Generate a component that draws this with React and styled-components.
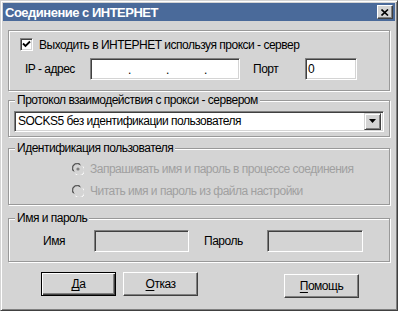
import React from "react";
import styled, { createGlobalStyle } from "styled-components";

const Global = createGlobalStyle`
  html, body { margin: 0; padding: 0; background: #d4d4d4; }
  body { font-family: "Liberation Sans", Arial, sans-serif; font-size: 12px; letter-spacing: -0.5px; color: #000; }
`;

const FACE = "#d4d4d4";

const Window = styled.div`
  width: 398px;
  height: 311px;
  box-sizing: border-box;
  background: ${FACE};
  border: 1px solid;
  border-color: ${FACE} #404040 #404040 ${FACE};
  box-shadow: inset 1px 1px 0 #fff, inset -1px -1px 0 #808080;
  padding: 2px;
  display: flex;
  flex-direction: column;
`;

const TitleBar = styled.div`
  height: 18px;
  background: #4a6a9a;
  display: flex;
  align-items: center;
  padding: 0 2px 0 2px;
  flex: none;
`;

const Title = styled.span`
  color: #fff;
  font-weight: bold;
  font-size: 13px;
  letter-spacing: -0.5px;
  flex: 1;
  white-space: nowrap;
`;

const CloseBtn = styled.div`
  width: 16px;
  height: 14px;
  box-sizing: border-box;
  background: ${FACE};
  border: 1px solid;
  border-color: #fff #404040 #404040 #fff;
  box-shadow: inset -1px -1px 0 #808080;
  display: flex;
  align-items: center;
  justify-content: center;
`;

const Body = styled.div`
  padding: 9px 0 0 5px;
  display: flex;
  flex-direction: column;
`;

const Group = styled.div`
  position: relative;
  width: 382px;
  height: ${(p) => p.$h}px;
  margin-top: ${(p) => p.$mt || 0}px;
  box-sizing: border-box;
  border: 1px solid #999;
  box-shadow: 1px 1px 0 #fff, inset 1px 1px 0 #fff;
  padding: ${(p) => p.$pad};
  display: flex;
  flex-direction: column;
`;

const Legend = styled.span`
  position: absolute;
  top: -8px;
  left: 6px;
  padding: 0 2px;
  line-height: 14px;
  background: ${FACE};
  white-space: nowrap;
`;

const Row = styled.div`
  display: flex;
  align-items: center;
  height: ${(p) => p.$h}px;
  margin-top: ${(p) => p.$mt || 0}px;
  margin-left: ${(p) => p.$ml || 0}px;
`;

const Check = styled.div`
  width: 13px;
  height: 13px;
  box-sizing: border-box;
  background: #fff;
  border: 1px solid;
  border-color: #808080 #fff #fff #808080;
  box-shadow: inset 1px 1px 0 #404040, inset -1px -1px 0 ${FACE};
  display: flex;
  align-items: center;
  justify-content: center;
  flex: none;
`;

const CheckLabel = styled.span`
  margin-left: 6px;
  white-space: nowrap;
`;

const Label = styled.span`
  width: ${(p) => p.$w}px;
  margin-left: ${(p) => p.$ml || 0}px;
  flex: none;
  white-space: nowrap;
`;

const Field = styled.div`
  width: ${(p) => p.$w}px;
  height: 22px;
  box-sizing: border-box;
  background: ${(p) => (p.$disabled ? FACE : "#fff")};
  border: 1px solid;
  border-color: #808080 #fff #fff #808080;
  box-shadow: inset 1px 1px 0 #404040, inset -1px -1px 0 ${FACE};
  display: flex;
  align-items: center;
  padding-left: 2px;
  flex: none;
  white-space: nowrap;
`;

const IpSeg = styled.span`
  width: 35px;
  flex: none;
`;

const IpDot = styled.span`
  width: 3px;
  flex: none;
  text-align: center;
  line-height: 12px;
  position: relative;
  top: 1px;
`;

const Combo = styled.div`
  height: 21px;
  box-sizing: border-box;
  background: #fff;
  border: 1px solid;
  border-color: #808080 #fff #fff #808080;
  box-shadow: inset 1px 1px 0 #404040, inset -1px -1px 0 ${FACE};
  display: flex;
  align-items: center;
  padding: 1px 2px 2px 2px;
`;

const ComboText = styled.span`
  flex: 1;
  padding-left: 1px;
  white-space: nowrap;
`;

const DropBtn = styled.div`
  width: 17px;
  height: 17px;
  box-sizing: border-box;
  background: ${FACE};
  border: 1px solid;
  border-color: ${FACE} #404040 #404040 ${FACE};
  box-shadow: inset 1px 1px 0 #fff, inset -1px -1px 0 #808080;
  display: flex;
  align-items: center;
  justify-content: center;
  flex: none;
`;

const RadioRow = styled.div`
  display: flex;
  align-items: center;
  height: 13px;
  margin-top: ${(p) => p.$mt || 0}px;
  color: #a0a0a0;
`;

const RadioText = styled.span`
  margin-left: 6px;
  white-space: nowrap;
`;

const Buttons = styled.div`
  display: flex;
  align-items: flex-start;
  margin-top: 10px;
  padding-left: 33px;
`;

const Button = styled.div`
  width: 75px;
  height: 24px;
  box-sizing: border-box;
  background: ${FACE};
  margin-left: ${(p) => p.$ml || 0}px;
  margin-top: ${(p) => p.$mt || 0}px;
  border: 1px solid;
  border-color: ${(p) => (p.$default ? "#000" : "#fff #404040 #404040 #fff")};
  box-shadow: ${(p) =>
    p.$default
      ? "inset 1px 1px 0 #fff, inset -1px -1px 0 #404040, inset -2px -2px 0 #808080"
      : "inset -1px -1px 0 #808080"};
  display: flex;
  align-items: center;
  justify-content: center;
  flex: none;
  u { text-decoration: underline; text-underline-offset: 2px; }
`;

const Radio = ({ checked }) => (
  <svg width="12" height="12" viewBox="0 0 12 12" style={{ flex: "none" }}>
    <path d="M1 8 A5 5 0 0 1 8 1" fill="none" stroke="#808080" />
    <path d="M2 8.5 A4 4 0 0 1 8.5 2" fill="none" stroke="#404040" />
    <path d="M3.5 11 A5 5 0 0 0 11 3.5" fill="none" stroke="#fff" />
    <circle cx="6" cy="6" r="3.6" fill={FACE} />
    {checked && <circle cx="6" cy="6" r="1.6" fill="#808080" />}
  </svg>
);

export default function App() {
  return (
    <>
      <Global />
      <Window>
        <TitleBar>
          <Title>Соединение с ИНТЕРНЕТ</Title>
          <CloseBtn>
            <svg width="8" height="7" viewBox="0 0 8 7">
              <path d="M0.5 0.5 L7 6.5 M7 0.5 L0.5 6.5" stroke="#000" strokeWidth="1.6" />
            </svg>
          </CloseBtn>
        </TitleBar>
        <Body>
          <Group $h={61} $pad="7px 0 0 11px">
            <Row $h={13}>
              <Check>
                <svg width="9" height="9" viewBox="0 0 9 9">
                  <path d="M1 3.5 L3.5 6 L8 1.5" fill="none" stroke="#000" strokeWidth="1.8" />
                </svg>
              </Check>
              <CheckLabel>Выходить в ИНТЕРНЕТ используя прокси - сервер</CheckLabel>
            </Row>
            <Row $h={22} $mt={7} $ml={5}>
              <Label $w={65}>IP - адрес</Label>
              <Field $w={150}>
                <IpSeg />
                <IpDot>.</IpDot>
                <IpSeg />
                <IpDot>.</IpDot>
                <IpSeg />
                <IpDot>.</IpDot>
                <IpSeg />
              </Field>
              <Label $w={52} $ml={13}>Порт</Label>
              <Field $w={52}>0</Field>
            </Row>
          </Group>

          <Group $h={37} $mt={9} $pad="10px 5px 0 5px">
            <Legend>Протокол взаимодействия с прокси - сервером</Legend>
            <Combo>
              <ComboText>SOCKS5 без идентификации пользователя</ComboText>
              <DropBtn>
                <svg width="7" height="4" viewBox="0 0 7 4">
                  <path d="M0 0 H7 L3.5 4 Z" fill="#000" />
                </svg>
              </DropBtn>
            </Combo>
          </Group>

          <Group $h={57} $mt={11} $pad="13px 0 0 63px">
            <Legend>Идентификация пользователя</Legend>
            <RadioRow>
              <Radio checked />
              <RadioText>Запрашивать имя и пароль в процессе соединения</RadioText>
            </RadioRow>
            <RadioRow $mt={9}>
              <Radio />
              <RadioText>Читать имя и пароль из файла настройки</RadioText>
            </RadioRow>
          </Group>

          <Group $h={44} $mt={13} $pad="11px 0 0 34px">
            <Legend>Имя и пароль</Legend>
            <Row $h={22}>
              <Label $w={51}>Имя</Label>
              <Field $w={95} $disabled />
              <Label $w={63} $ml={15}>Пароль</Label>
              <Field $w={96} $disabled />
            </Row>
          </Group>

          <Buttons>
            <Button $default>
              <span><u>Д</u>а</span>
            </Button>
            <Button $ml={7}>
              <span><u>О</u>тказ</span>
            </Button>
            <Button $ml={86} $mt={2}>
              <span><u>П</u>омощь</span>
            </Button>
          </Buttons>
        </Body>
      </Window>
    </>
  );
}
